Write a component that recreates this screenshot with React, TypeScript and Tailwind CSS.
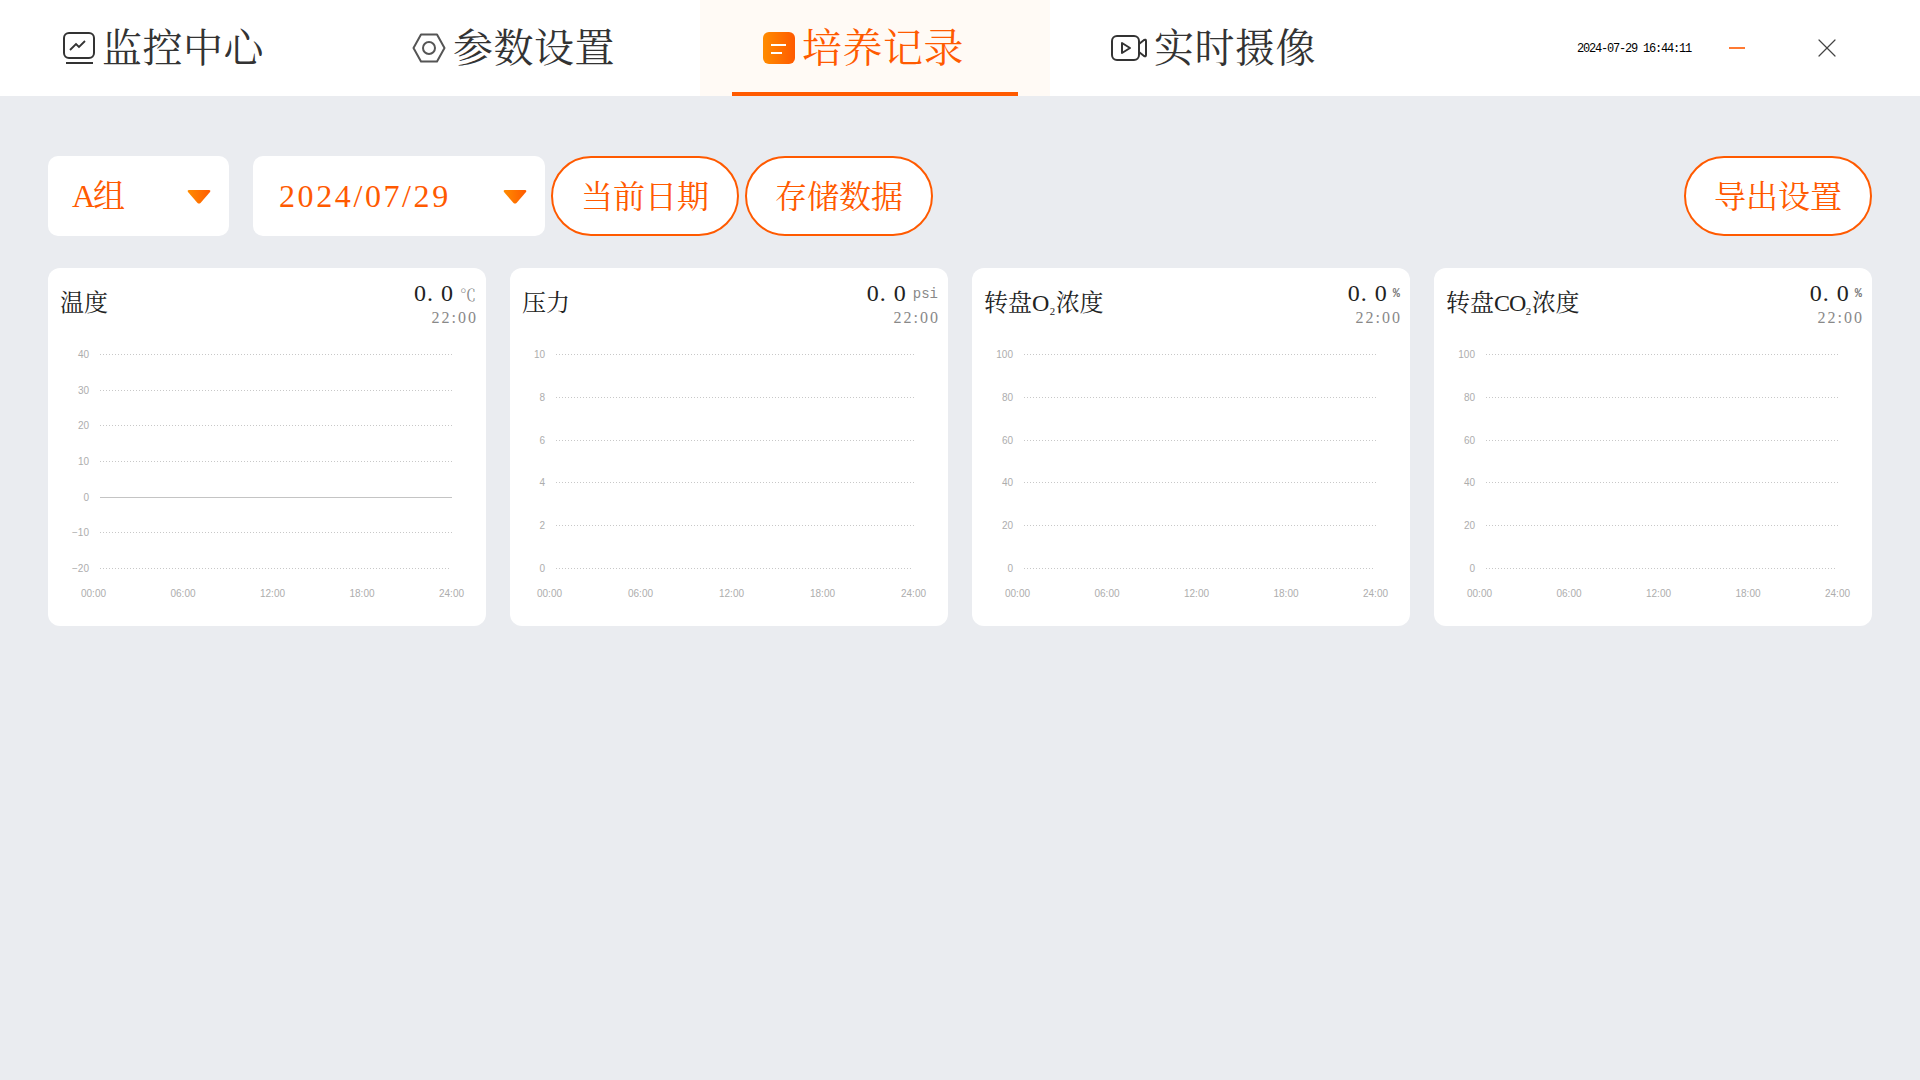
import type { ReactNode } from "react";
import { X } from "lucide-react";

const serif = "font-['Liberation_Serif','Noto_Serif_CJK_SC','Noto_Sans_CJK_SC',serif]";

const MonitorIcon = () => (
    <svg width="32" height="32" viewBox="0 0 32 32" fill="none" stroke="#333" strokeWidth="2">
        <rect x="1" y="1" width="30" height="25" rx="5" />
        <path d="M7 18l6-6 3 3 6-6" strokeWidth="1.8" />
        <path d="M3 31h27" />
    </svg>
);

const SettingIcon = () => (
    <svg width="34" height="30" viewBox="0 0 34 30" fill="none" stroke="#555" strokeWidth="2">
        <path d="M1.5 15L9 1.5h16L32.5 15 25 28.5H9z" strokeLinejoin="round" />
        <circle cx="17" cy="15" r="6" />
    </svg>
);

const RecordIcon = () => (
    <svg width="32" height="32" viewBox="0 0 32 32">
        <defs>
            <linearGradient id="rec" x1="0" x2="1" y1="0" y2="0">
                <stop offset="0" stopColor="#ff8c00" />
                <stop offset="1" stopColor="#ff5a00" />
            </linearGradient>
        </defs>
        <rect width="32" height="32" rx="6" fill="url(#rec)" />
        <rect x="8" y="12" width="15" height="2" fill="#fff" />
        <rect x="8" y="20" width="11" height="2" fill="#fff" />
    </svg>
);

const CameraIcon = () => (
    <svg width="36" height="26" viewBox="0 0 36 26" fill="none" stroke="#333" strokeWidth="2">
        <rect x="1" y="1" width="27" height="24" rx="5" />
        <path d="M11 8v10l8-5z" strokeLinejoin="round" />
        <path d="M28 9l5-4q2-1 2 1v14q0 2-2 1l-5-4" />
    </svg>
);

const tabs = [
    { label: "监控中心", icon: <MonitorIcon />, className: "w-[350px] pl-[63px] text-[#333]" },
    { label: "参数设置", icon: <SettingIcon />, className: "w-[350px] pl-[62px] text-[#333]" },
    { label: "培养记录", icon: <RecordIcon />, className: "relative w-[350px] pl-[63px] bg-[#fffaf5] text-[#ff5a00]", active: true },
    { label: "实时摄像", icon: <CameraIcon />, className: "w-[350px] pl-[61px] text-[#333]" },
];

const Triangle = () => (
    <svg width="24" height="14" viewBox="0 0 24 14" className="mt-px">
        <defs>
            <linearGradient id="tri" x1="0" x2="1" y1="0" y2="0">
                <stop offset="0" stopColor="#ff8c00" />
                <stop offset="1" stopColor="#ff5a00" />
            </linearGradient>
        </defs>
        <path d="M2 0h20q2 0 1 2L13.500 13q-1.500 1-3 0L1 2Q0 0 2 0z" fill="url(#tri)" />
    </svg>
);

const PillButton = ({ label, className = "" }: { label: string; className?: string }) => (
    <button className={`h-20 w-[188px] rounded-full border-[2.5px] border-[#ff5a00] bg-white pt-0.5 text-[32px] text-[#ff5a00] ${className}`}>
        {label}
    </button>
);

interface ChartProps {
    title: ReactNode;
    unit: string;
    unitClass: string;
    left: number;
    right: number;
    ticks: string[];
    ys: number[];
    solid?: string;
}

const Chart = ({ title, unit, unitClass, left, right, ticks, ys, solid }: ChartProps) => {
    const step = (right - left) / 4;
    return (
        <div className="h-[358px] rounded-xl bg-white">
            <div className="flex h-[62px] justify-between pl-3 pr-[10px]">
                <div className="pt-[20px] text-2xl leading-[30px] text-[#222]">{title}</div>
                <div className="flex flex-col items-end pt-[12px]">
                    <div className="flex h-[26px] items-end leading-none">
                        <span className="text-2xl leading-[26px] tracking-[1px] text-[#222]">0. 0</span>
                        <span className={unitClass}>{unit}</span>
                    </div>
                    <span className="mt-[2px] -mr-0.5 text-base leading-5 tracking-[2px] text-[#888]">22:00</span>
                </div>
            </div>
            <svg width="438" height="296" viewBox="0 0 438 296" className="block font-['Liberation_Sans',sans-serif]">
                {ys.map((y, i) => (
                    <g key={ticks[i]}>
                        <text x={left - 11} y={y + 4} textAnchor="end" fontSize="10" fill="#adadad">{ticks[i]}</text>
                        {ticks[i] === solid ? (
                            <line x1={left} x2={right} y1={y + 0.5} y2={y + 0.5} stroke="#c4c4c4" />
                        ) : (
                            <line x1={left} x2={i === ys.length - 1 ? right - 3 : right} y1={y + 0.5} y2={y + 0.5} stroke="#c8c8c8" strokeDasharray="1 2" />
                        )}
                    </g>
                ))}
                {["00:00", "06:00", "12:00", "18:00", "24:00"].map((t, i) => (
                    <text key={t} x={left - 6.5 + i * (step + 1.5)} y="267" textAnchor="middle" fontSize="10" fill="#adadad">{t}</text>
                ))}
            </svg>
        </div>
    );
};

const ySix = [24, 67, 110, 152, 195, 238];
const sub = <span className="text-lg">₂</span>;

export default function App() {
    return (
        <div className={`min-h-[1080px] bg-[#eaecf0] ${serif}`}>
            <header className="flex h-24 items-stretch bg-white">
                {tabs.map((tab) => (
                    <div key={tab.label} className={`flex items-center gap-[7px] text-[40px] tracking-[0.5px] ${tab.className}`}>
                        {tab.icon}
                        <span className="pt-0.5">{tab.label}</span>
                        {tab.active && <div className="absolute bottom-0 left-8 h-1 w-[286px] bg-[#ff5a00]" />}
                    </div>
                ))}
                <div className="flex items-center pl-[177px]">
                    <span className="mt-px w-[114px] whitespace-nowrap font-['Liberation_Mono',monospace] text-xs tracking-[-1.2px] text-black">2024-07-29 16:44:11</span>
                    <div className="ml-[38px] h-0.5 w-4 bg-[#ff7a33]" />
                    <X className="ml-[66px] h-8 w-8 text-[#444]" strokeWidth={0.9} />
                </div>
            </header>
            <main className="px-12 pt-[60px]">
                <div className="flex items-center">
                    <div className="flex h-20 w-[181px] items-center justify-between rounded-[10px] bg-white pl-6 pr-[18px] text-[32px] text-[#ff5a00]">
                        <span><span className="tracking-[-2px]">A</span>组</span>
                        <Triangle />
                    </div>
                    <div className="ml-6 flex h-20 w-[292px] items-center justify-between rounded-[10px] bg-white pl-[26px] pr-[18px] text-[32px] tracking-[2.6px] text-[#ff5a00]">
                        <span>2024/07/29</span>
                        <Triangle />
                    </div>
                    <PillButton label="当前日期" className="ml-[6px]" />
                    <PillButton label="存储数据" className="ml-[6px]" />
                    <PillButton label="导出设置" className="ml-auto" />
                </div>
                <div className="mt-8 grid grid-cols-4 gap-6">
                    <Chart title="温度" unit="℃" unitClass="ml-[6px] text-base leading-5 text-[#888]" left={52} right={404} ticks={["40", "30", "20", "10", "0", "−10", "−20"]} ys={[24, 60, 95, 131, 167, 202, 238]} solid="0" />
                    <Chart title="压力" unit="psi" unitClass="ml-[6px] mb-1 font-['Liberation_Mono',monospace] text-sm leading-4 text-[#888]" left={46} right={404} ticks={["10", "8", "6", "4", "2", "0"]} ys={ySix} />
                    <Chart title={<>转盘O{sub}浓度</>} unit="%" unitClass="ml-[5px] mb-1 font-['Liberation_Mono',monospace] text-xs leading-4 font-bold text-[#777]" left={52} right={404} ticks={["100", "80", "60", "40", "20", "0"]} ys={ySix} />
                    <Chart title={<span>转盘<span className="tracking-[-1px]">CO</span>{sub}浓度</span>} unit="%" unitClass="ml-[5px] mb-1 font-['Liberation_Mono',monospace] text-xs leading-4 font-bold text-[#777]" left={52} right={404} ticks={["100", "80", "60", "40", "20", "0"]} ys={ySix} />
                </div>
            </main>
        </div>
    );
}
